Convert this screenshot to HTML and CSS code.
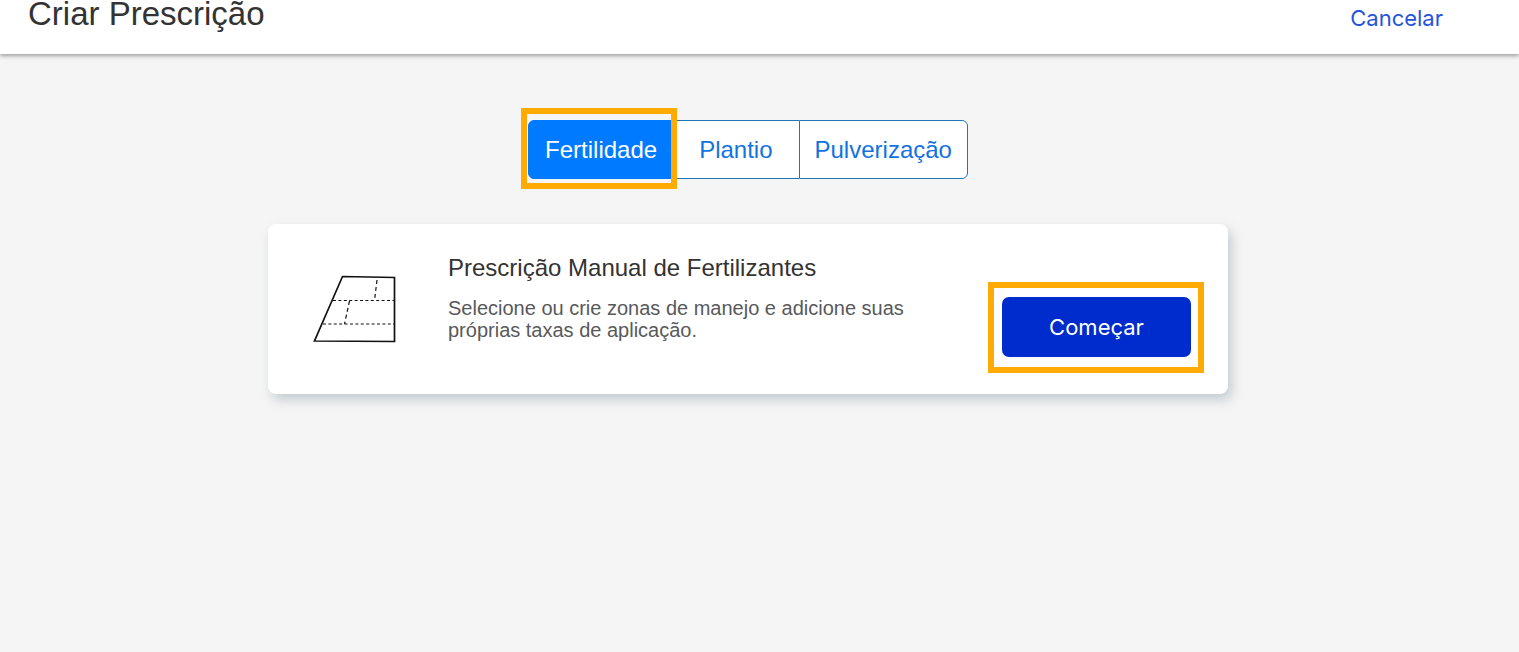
FILE: index.html
```html
<!DOCTYPE html>
<html lang="pt-BR">
<head>
<meta charset="utf-8">
<meta name="viewport" content="width=device-width, initial-scale=1">
<title>Criar Prescrição</title>
<link rel="stylesheet" href="styles.css">
</head>
<body>
<header class="header">
  <h1 class="header-title">Criar Prescrição</h1>
  <a class="header-cancel" href="#">Cancelar</a>
</header>
<main class="main">
  <nav class="tabs" aria-label="Tipo de prescrição">
    <button type="button" class="tab tab-active highlight">Fertilidade</button>
    <button type="button" class="tab tab-middle">Plantio</button>
    <button type="button" class="tab tab-last">Pulverização</button>
  </nav>
  <section class="card">
    <svg class="card-icon" viewBox="0 0 84 68" fill="none" stroke="#111" aria-hidden="true">
      <path d="M29.5 1.5 81.500 2.500V66.500L1.500 66Z" stroke-width="1.7"/>
      <path d="M20 25.500H81M10 49H81" stroke-width="1.2" stroke-dasharray="3 2.4"/>
      <path d="M64 5 61.500 25.500M36.500 26 31.500 49" stroke-width="1.2" stroke-dasharray="4 3"/>
    </svg>
    <div class="card-text">
      <h2 class="card-title">Prescrição Manual de Fertilizantes</h2>
      <p class="card-desc">Selecione ou crie zonas de manejo e adicione suas próprias taxas de aplicação.</p>
    </div>
    <button type="button" class="start highlight">Começar</button>
  </section>
</main>
</body>
</html>
```
FILE: styles.css
```css
* { box-sizing: border-box; }

body {
  margin: 0;
  min-height: 100vh;
  background: #f5f5f5;
  color: #333;
  font-family: "Liberation Sans", Arial, sans-serif;
}

button { font: inherit; cursor: pointer; }

.header {
  display: flex;
  justify-content: space-between;
  align-items: flex-start;
  height: 54px;
  padding: 0 76px 0 28px;
  background: #fff;
  box-shadow: 0 2px 4px rgba(0, 0, 0, 0.35);
}

.header-title {
  margin: 0;
  font-size: 33px;
  font-weight: 400;
  line-height: 28px;
}

.header-cancel {
  color: #2554d8;
  font-family: Inter, sans-serif;
  font-size: 22px;
  line-height: 36px;
  text-decoration: none;
}

.main {
  display: flex;
  flex-direction: column;
  align-items: center;
  gap: 45px;
  padding: 66px 23px 48px 0;
}

.tabs { display: flex; }

.tab {
  height: 59px;
  padding: 0 14px;
  border: 1px solid #1f77b8;
  background: #fff;
  color: #1273e0;
  font-size: 24px;
}

.tab-active {
  padding: 0 16px;
  border-color: #007bff;
  border-radius: 6px 0 0 6px;
  background: #007bff;
  color: #fff;
}

.tab-middle { padding: 0 26px 0 25px; border-right: 0; border-left: 0; }

.tab-last { padding: 0 15px; border-radius: 0 6px 6px 0; }

.highlight { position: relative; }

.highlight::after {
  content: "";
  position: absolute;
  border: 6px solid #ffab03;
  pointer-events: none;
}

.tab-active::after { inset: -13px -4px -11px -8px; }

.card {
  display: flex;
  align-items: flex-start;
  width: 100%;
  max-width: 960px;
  min-height: 170px;
  padding: 28px 37px 28px 45px;
  border-radius: 8px;
  background: #fff;
  box-shadow: 4px 6px 12px rgba(110, 130, 140, 0.35);
}

.card-icon {
  flex: none;
  width: 84px;
  height: 68px;
  margin-top: 23px;
}

.card-text {
  flex: 1;
  margin-left: 51px;
}

.card-title {
  margin: 0;
  font-size: 24px;
  font-weight: 400;
  line-height: 32px;
}

.card-desc {
  max-width: 460px;
  margin: 13px 0 0;
  color: #58595b;
  font-size: 20px;
  line-height: 22px;
}

.start {
  flex: none;
  min-width: 189px;
  height: 60px;
  margin-top: 45px;
  border: 0;
  border-radius: 7px;
  background: #002ccd;
  color: #fff;
  font-family: Inter, sans-serif;
  font-size: 22px;
}

.start::after { inset: -15px -13px -16px -14px; }
```
